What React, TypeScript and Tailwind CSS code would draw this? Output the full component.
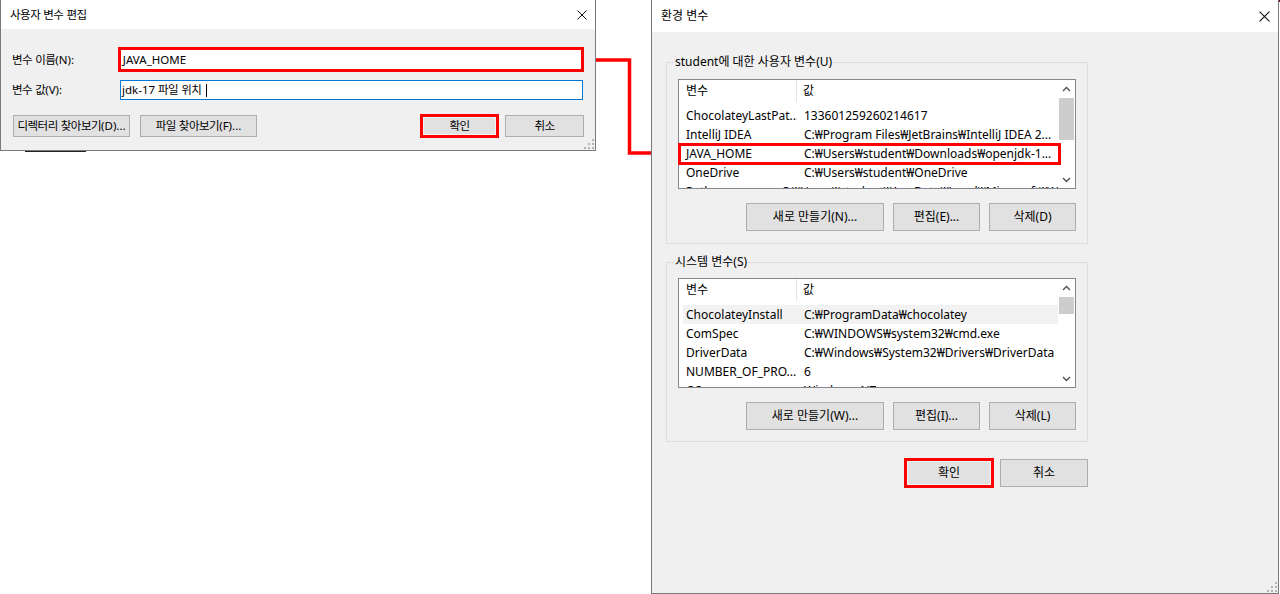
import React from "react";

// Hangul runs take their tracking from --hk, set per dialog (the two captures differ in scale)
const HANGUL = /([\uAC00-\uD7A3\u3131-\u318E]+)/;

function T({ s }: { s: string }) {
  const parts = s.split(HANGUL);
  return (
    <span className="whitespace-pre">
      {parts.map((p, i) =>
        i % 2 === 1 ? (
          <span key={i} className="tracking-[var(--hk)]">
            {p}
          </span>
        ) : (
          <React.Fragment key={i}>{p}</React.Fragment>
        )
      )}
    </span>
  );
}

function CloseX({ size = 10 }: { size?: number }) {
  return (
    <svg width={size} height={size} viewBox="0 0 10 10" className="shrink-0">
      <path d="M0.5 0.5 L9.5 9.5 M9.5 0.5 L0.5 9.5" stroke="#111" strokeWidth="1" fill="none" />
    </svg>
  );
}

function Grip() {
  return (
    <svg width="10" height="10" viewBox="0 0 10 10">
      {[
        [8, 0],
        [4, 4],
        [8, 4],
        [0, 8],
        [4, 8],
        [8, 8],
      ].map(([x, y], i) => (
        <rect key={i} x={x} y={y} width="2" height="2" fill="#b5b5b5" />
      ))}
    </svg>
  );
}

function Btn({ label, className = "" }: { label: string; className?: string }) {
  return (
    <div
      className={`flex items-center justify-center bg-[#e1e1e1] border border-[#adadad] whitespace-nowrap ${className}`}
    >
      <T s={label} />
    </div>
  );
}

function RedBtn({ label, className = "" }: { label: string; className?: string }) {
  return (
    <div className={`border-[3px] border-[#ff0000] ${className}`}>
      <div className="w-full h-full flex items-center justify-center bg-[#e1e1e1] border border-[#f4f4f4]">
        <T s={label} />
      </div>
    </div>
  );
}

function Chevron({ down = false }: { down?: boolean }) {
  return (
    <svg width="9" height="6" viewBox="0 0 9 6">
      <path
        d={down ? "M1 1 L4.5 4.5 L8 1" : "M1 5 L4.5 1.5 L8 5"}
        stroke="#505050"
        strokeWidth="1.4"
        fill="none"
      />
    </svg>
  );
}

type Row = [string, string];

function VarList({
  rows,
  thumbH,
  selected,
  marked,
}: {
  rows: Row[];
  thumbH: number;
  selected?: number;
  marked?: number;
}) {
  return (
    <div className="relative w-[398px] h-[110px] border border-[#828790] bg-white flex">
      <div className="flex-1 flex flex-col overflow-hidden">
        <div className="h-[26px] flex shrink-0">
          <div className="w-[118px] h-[22px] flex items-center pl-[7px] border-r border-[#e5e5e5]">
            <T s="변수" />
          </div>
          <div className="h-[22px] flex items-center pl-[6px]">
            <T s="값" />
          </div>
        </div>
        {rows.map(([name, value], i) => (
          <div
            key={name}
            className={`h-[19px] shrink-0 ml-[4px] flex items-center whitespace-nowrap ${
              i === selected ? "bg-[#f2f2f2]" : ""
            }`}
          >
            <div className="w-[114px] pl-[3px] overflow-hidden">{name}</div>
            <div className="pl-[7px] overflow-hidden">{value}</div>
          </div>
        ))}
      </div>
      <div className="w-[17px] flex flex-col bg-white shrink-0">
        <div className="h-[17px] flex items-center justify-center">
          <Chevron />
        </div>
        <div className="flex-1">
          <div className="mt-[1px] mx-[1px] bg-[#cdcdcd]" style={{ height: thumbH }} />
        </div>
        <div className="h-[17px] flex items-center justify-center">
          <Chevron down />
        </div>
      </div>
      {marked !== undefined && (
        <div
          className="absolute -left-[1px] w-[383px] h-[22px] border-[3px] border-[#ff0000]"
          style={{ top: 26 + marked * 19 - 1 }}
        />
      )}
    </div>
  );
}

function Group({
  title,
  className = "",
  children,
}: {
  title: string;
  className?: string;
  children: React.ReactNode;
}) {
  return (
    <div className={`relative w-[422px] border border-[#dcdcdc] pl-[11px] ${className}`}>
      <div className="absolute -top-[9px] left-[7px] px-[1px] bg-[#f0f0f0] leading-[16px] whitespace-nowrap">
        <T s={title} />
      </div>
      {children}
    </div>
  );
}

const userRows: Row[] = [
  ["ChocolateyLastPat...", "133601259260214617"],
  ["IntelliJ IDEA", "C:₩Program Files₩JetBrains₩IntelliJ IDEA 2..."],
  ["JAVA_HOME", "C:₩Users₩student₩Downloads₩openjdk-1..."],
  ["OneDrive", "C:₩Users₩student₩OneDrive"],
  ["Path", "C:₩Users₩student₩AppData₩Local₩Microsoft₩WindowsApps;"],
];

const sysRows: Row[] = [
  ["ChocolateyInstall", "C:₩ProgramData₩chocolatey"],
  ["ComSpec", "C:₩WINDOWS₩system32₩cmd.exe"],
  ["DriverData", "C:₩Windows₩System32₩Drivers₩DriverData"],
  ["NUMBER_OF_PRO...", "6"],
  ["OS", "Windows_NT"],
];

export default function App() {
  return (
    <div className="relative w-[1280px] h-[594px] bg-white overflow-hidden font-['Noto_Sans','Noto_Sans_CJK_KR',sans-serif] leading-[16px] text-black">
      {/* leftovers of windows behind */}
      <div className="absolute left-[908px] top-0 w-[302px] h-[1px] bg-[#3c3c3c]" />
      <div className="absolute left-[1210px] top-0 w-[70px] h-[2px] bg-[#6b0a0a]" />
      <div className="absolute left-[25px] top-[150px] w-[61px] h-[2px] bg-[#222]" />
      <div className="absolute left-[86px] top-[150px] w-[24px] h-[1px] bg-[#9a9a9a]" />

      {/* 사용자 변수 편집 */}
      <div className="absolute left-0 top-0 w-[596px] h-[151px] flex flex-col border-l border-r border-b border-[#7a7a7a] bg-[#f0f0f0] text-[11.5px] [--hk:-0.5px]">
        <div className="h-[29px] shrink-0 bg-white flex items-center justify-between pl-[9px] pr-[8px]">
          <T s="사용자 변수 편집" />
          <CloseX />
        </div>
        <div className="flex flex-col px-[11px] pt-[18px]">
          <div className="flex items-center h-[25px]">
            <div className="w-[106px]">
              <T s="변수 이름(N):" />
            </div>
            <div className="w-[467px] h-[25px] border-[3px] border-[#ff0000] bg-white flex items-center pl-[2px]">
              JAVA_HOME
            </div>
          </div>
          <div className="flex items-center h-[20px] mt-[8px]">
            <div className="w-[108px]">
              <T s="변수 값(V):" />
            </div>
            <div className="w-[463px] h-[20px] border border-[#0078d7] bg-white flex items-center pl-[1px]">
              <T s="jdk-17 파일 위치" />
              <span className="ml-[5px] w-[1px] h-[13px] bg-black" />
            </div>
          </div>
          <div className="flex items-center h-[24px] mt-[14px]">
            <Btn label="디렉터리 찾아보기(D)..." className="ml-[1px] w-[117px] h-[22px]" />
            <Btn label="파일 찾아보기(F)..." className="ml-[10px] w-[117px] h-[22px]" />
            <div className="flex-1" />
            <RedBtn label="확인" className="w-[79px] h-[24px]" />
            <Btn label="취소" className="ml-[6px] w-[79px] h-[22px]" />
          </div>
        </div>
        <div className="absolute right-[1px] bottom-[1px]">
          <Grip />
        </div>
      </div>

      {/* arrow */}
      <svg className="absolute left-[590px] top-[50px]" width="90" height="120" viewBox="0 0 90 120">
        <path d="M6 10 H39.5 V103 H68" stroke="#ff0000" strokeWidth="3.5" fill="none" />
        <polygon points="66,95.5 81,103 66,110.5" fill="#ff0000" />
      </svg>

      {/* 환경 변수 */}
      <div className="absolute left-[651px] top-0 w-[628px] h-[594px] flex flex-col border-l border-r border-b border-[#7a7a7a] bg-[#f0f0f0] text-[12px] [--hk:0px]">
        <div className="h-[32px] shrink-0 bg-white flex items-center justify-between pl-[9px] pr-[8px]">
          <T s="환경 변수" />
          <CloseX size={11} />
        </div>
        <div className="flex flex-col pl-[14px] pt-[30px]">
          <Group title="student에 대한 사용자 변수(U)" className="h-[182px] pt-[16px]">
            <VarList rows={userRows} thumbH={42} marked={2} />
            <div className="w-[398px] mt-[14px] flex justify-end gap-[9px]">
              <Btn label="새로 만들기(N)..." className="w-[138px] h-[28px]" />
              <Btn label="편집(E)..." className="w-[87px] h-[28px]" />
              <Btn label="삭제(D)" className="w-[87px] h-[28px]" />
            </div>
          </Group>
          <Group title="시스템 변수(S)" className="h-[180px] pt-[15px] mt-[18px]">
            <VarList rows={sysRows} thumbH={17} selected={0} />
            <div className="w-[398px] mt-[14px] flex justify-end gap-[9px]">
              <Btn label="새로 만들기(W)..." className="w-[138px] h-[28px]" />
              <Btn label="편집(I)..." className="w-[87px] h-[28px]" />
              <Btn label="삭제(L)" className="w-[87px] h-[28px]" />
            </div>
          </Group>
          <div className="w-[422px] mt-[16px] flex justify-end items-center gap-[6px]">
            <RedBtn label="확인" className="w-[90px] h-[30px]" />
            <Btn label="취소" className="w-[88px] h-[28px]" />
          </div>
        </div>
        <div className="absolute right-[1px] bottom-[1px]">
          <Grip />
        </div>
      </div>
    </div>
  );
}
